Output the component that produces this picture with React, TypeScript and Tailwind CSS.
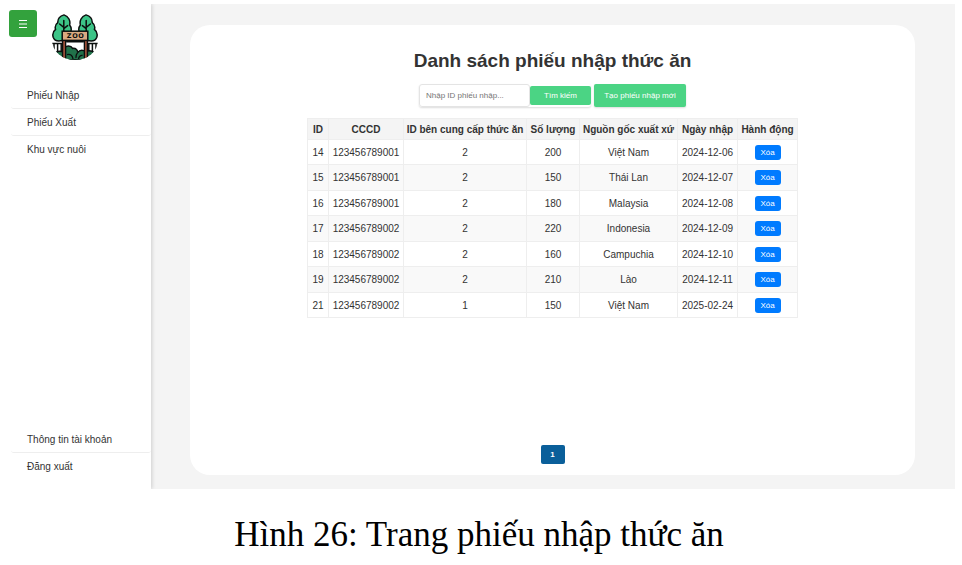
import React from "react";

type Receipt = {
  id: number;
  cccd: string;
  supplier: number;
  quantity: number;
  origin: string;
  date: string;
};

const receipts: Receipt[] = [
  { id: 14, cccd: "123456789001", supplier: 2, quantity: 200, origin: "Việt Nam", date: "2024-12-06" },
  { id: 15, cccd: "123456789001", supplier: 2, quantity: 150, origin: "Thái Lan", date: "2024-12-07" },
  { id: 16, cccd: "123456789001", supplier: 2, quantity: 180, origin: "Malaysia", date: "2024-12-08" },
  { id: 17, cccd: "123456789002", supplier: 2, quantity: 220, origin: "Indonesia", date: "2024-12-09" },
  { id: 18, cccd: "123456789002", supplier: 2, quantity: 160, origin: "Campuchia", date: "2024-12-10" },
  { id: 19, cccd: "123456789002", supplier: 2, quantity: 210, origin: "Lào", date: "2024-12-11" },
  { id: 21, cccd: "123456789002", supplier: 1, quantity: 150, origin: "Việt Nam", date: "2025-02-24" },
];

const columns = [
  { label: "ID", width: "w-[21px]" },
  { label: "CCCD", width: "w-[75px]" },
  { label: "ID bên cung cấp thức ăn", width: "w-[123px]" },
  { label: "Số lượng", width: "w-[53px]" },
  { label: "Nguồn gốc xuất xứ", width: "w-[98px]" },
  { label: "Ngày nhập", width: "w-[60px]" },
  { label: "Hành động", width: "w-[60px]" },
];

function Tree() {
  return (
    <g stroke="#0b0f0e" strokeWidth="1.5" strokeLinejoin="round" strokeLinecap="round">
      <path
        d="M12 .9C8.4 2 5.6 4.8 5.8 8.6C3.4 10.4 2.8 13 3.6 15.4C1 17.4 .4 20.6 1.2 23.2C2.2 26.2 5 27.2 8.4 26.8H19V17C19.6 14.6 18.8 12.4 17.6 11C18.6 7 16.8 2.4 12 .9Z"
        fill="#3cc487"
      />
      <path d="M11.8 6.4V17M11.8 13.4L7.6 10M11.8 14.6L15.6 11.6" fill="none" />
    </g>
  );
}

function ZooLogo() {
  return (
    <svg viewBox="0 0 46 46" className="size-[46px]" role="img" aria-label="Zoo">
      <defs>
        <clipPath id="badge">
          <path d="M0 0H46V26A23 20 0 0 1 0 26Z" />
        </clipPath>
      </defs>
      <g clipPath="url(#badge)">
        <g stroke="#0b0f0e" strokeWidth="1.5" fill="none">
          <path d="M0 29.6H12M34 29.6H46" />
          <path d="M2 29V36M5.6 29V39M9.2 29V39M36.8 29V39M40.4 29V39M44 29V36" />
        </g>
        <Tree />
        <g transform="translate(46 0) scale(-1 1)">
          <Tree />
        </g>
        <path
          d="M3 46V39C6 36 9 37 12 38.4V34.4C14 31 19 31.4 20.6 34.4C24 34 26 36.4 25.6 38.6C27.6 35.8 31 35.8 34 37.6C37 36 40 36.6 43 39V46Z"
          fill="#21724a"
          stroke="#0b0f0e"
          strokeWidth="1.5"
        />
        <path
          d="M15 40.6C18 39.6 20.6 41.4 21 45M25.6 38.6C24 40.4 23.6 42 24 44M30.6 41.4C28.4 41 26.6 42.8 26.6 45"
          fill="none"
          stroke="#0b0f0e"
          strokeWidth="1.3"
        />
        <path d="M10.6 26H13.6V46H10.6ZM32.4 26H35.4V46H32.4Z" fill="#a8563c" stroke="#0b0f0e" strokeWidth="1.4" />
        <path d="M14.2 27.6H31.8" stroke="#0b0f0e" strokeWidth="1.6" />
      </g>
      <rect x="10.2" y="17.2" width="25.6" height="9.2" fill="#dba981" stroke="#0b0f0e" strokeWidth="1.5" />
      <text
        x="17 23 29"
        y="24.2"
        textAnchor="middle"
        fontSize="6.5"
        fontWeight="700"
        fontFamily="DejaVu Sans, sans-serif"
        fill="#0b0f0e"
      >
        ZOO
      </text>
    </svg>
  );
}

function NavLink({ children, divided }: { children: React.ReactNode; divided?: boolean }) {
  return (
    <a
      href="#"
      className={
        "flex h-[27px] items-center rounded-[3px] border-b pl-4 text-[#333] " +
        (divided ? "border-[#eee]" : "border-transparent")
      }
    >
      {children}
    </a>
  );
}

export default function App() {
  return (
    <div className="min-h-screen bg-white pt-1">
      <div className="mr-[7px] flex h-[485px] overflow-hidden bg-[#f4f4f4] font-['Liberation_Sans',Arial,sans-serif] text-[10px] text-[#333]">
        <aside className="z-10 flex w-[151px] shrink-0 flex-col bg-white pl-[11px] shadow-[1px_0_4px_rgba(0,0,0,0.16)]">
          <div className="-ml-[2px] flex h-[73px] gap-[15px] pt-[5px]">
            <button
              type="button"
              aria-label="Menu"
              className="mt-px flex h-[27px] w-7 items-center justify-center rounded-[3px] bg-[#33a23d] text-white"
            >
              <svg viewBox="0 0 10 10" className="size-[10px]" stroke="currentColor" strokeWidth="1">
                <path d="M1 1.5H9M1 5H9M1 8.5H9" />
              </svg>
            </button>
            <div className="pt-[5px]">
              <ZooLogo />
            </div>
          </div>
          <nav className="flex grow flex-col pt-[5px] pb-[9px]">
            <NavLink divided>Phiếu Nhập</NavLink>
            <NavLink divided>Phiếu Xuất</NavLink>
            <NavLink>Khu vực nuôi</NavLink>
            <div className="mt-auto">
              <NavLink divided>Thông tin tài khoản</NavLink>
              <NavLink>Đăng xuất</NavLink>
            </div>
          </nav>
        </aside>

        <main className="flex grow pt-[21px] pr-10 pb-[14px] pl-[39px]">
          <section className="flex grow flex-col items-center rounded-[20px] bg-white pt-6 pb-[11px]">
            <h1 className="text-[19px] leading-6 font-bold">Danh sách phiếu nhập thức ăn</h1>

            <form className="mt-[11px] flex gap-[3px] text-[8px]" onSubmit={(e) => e.preventDefault()}>
              <div className="flex h-[23px] items-center rounded-[3px] shadow-[0_1px_2px_rgba(0,0,0,0.14)]">
                <input
                  type="text"
                  aria-label="Nhập ID phiếu nhập"
                  placeholder="Nhập ID phiếu nhập..."
                  className="h-[23px] w-[111px] rounded-[3px] border border-[#e4e4e4] bg-white px-[6px] placeholder:text-[#757575]"
                />
                <button type="submit" className="h-[19px] w-[61px] rounded-[2px] bg-[#4bd484] text-white">
                  Tìm kiếm
                </button>
              </div>
              <button
                type="button"
                className="h-[23px] w-[92px] rounded-[2px] bg-[#4bd484] text-white shadow-[0_1px_2px_rgba(0,0,0,0.14)]"
              >
                Tạo phiếu nhập mới
              </button>
            </form>

            <table className="mt-[11px] w-[491px] table-fixed border-collapse text-center">
              <thead>
                <tr className="h-[21px] bg-[#f4f4f4]">
                  {columns.map((c) => (
                    <th key={c.label} className={"border border-[#eee] p-0 font-bold whitespace-nowrap " + c.width}>
                      {c.label}
                    </th>
                  ))}
                </tr>
              </thead>
              <tbody>
                {receipts.map((r) => (
                  <tr key={r.id} className="odd:h-[25px] even:h-[26px] even:bg-[#f9f9f9]">
                    <td className="border border-[#eee] p-0">{r.id}</td>
                    <td className="border border-[#eee] p-0">{r.cccd}</td>
                    <td className="border border-[#eee] p-0">{r.supplier}</td>
                    <td className="border border-[#eee] p-0">{r.quantity}</td>
                    <td className="border border-[#eee] p-0">{r.origin}</td>
                    <td className="border border-[#eee] p-0">{r.date}</td>
                    <td className="border border-[#eee] p-0">
                      <button
                        type="button"
                        className="mx-auto block h-[15px] w-[26px] rounded-[3px] bg-[#007bff] text-[8px] leading-[15px] text-white"
                      >
                        Xóa
                      </button>
                    </td>
                  </tr>
                ))}
              </tbody>
            </table>

            <button
              type="button"
              aria-current="page"
              className="mt-auto h-[19px] w-6 rounded-[2px] bg-[#0a5f9a] text-[8px] font-bold text-white"
            >
              1
            </button>
          </section>
        </main>
      </div>

      <p className="mt-[27px] pr-1 text-center font-['Liberation_Serif','Times_New_Roman',serif] text-[35px] leading-[38px] text-black">
        Hình 26: Trang phiếu nhập thức ăn
      </p>
    </div>
  );
}
